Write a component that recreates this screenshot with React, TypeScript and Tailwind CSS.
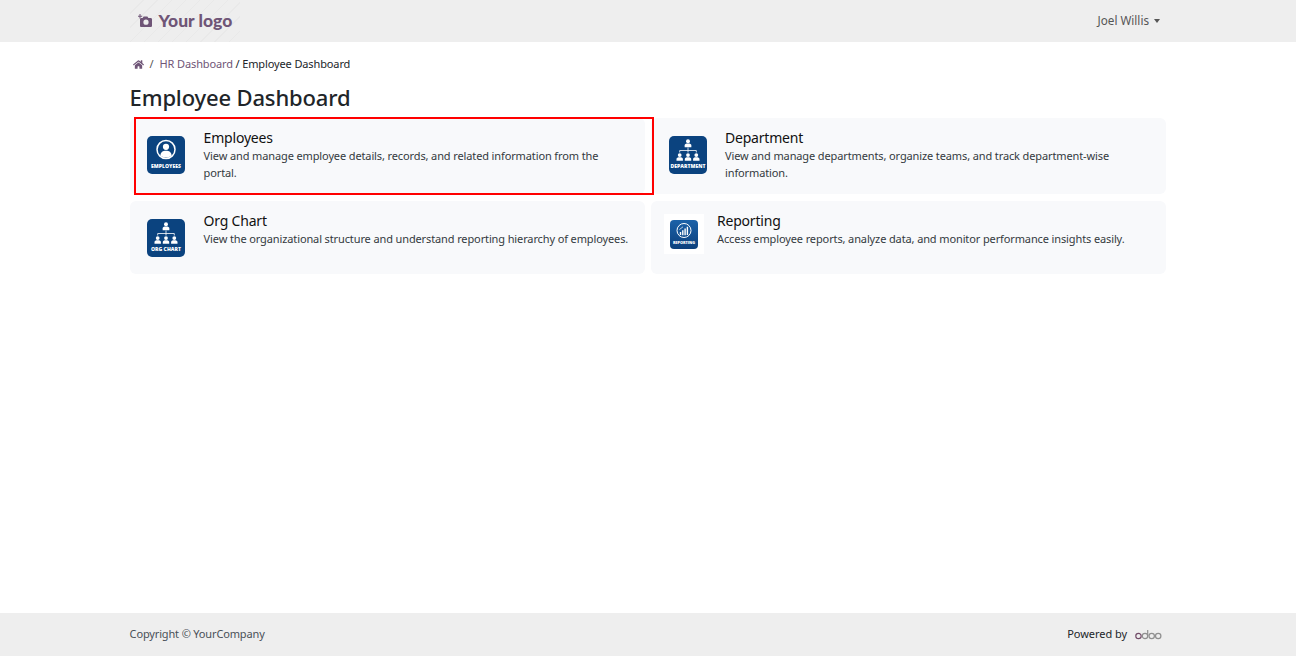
import React from 'react';
import { FaHome } from 'react-icons/fa';

const Person = ({ x, y, s = 1 }: { x: number; y: number; s?: number }) => (
  <g transform={`translate(${x} ${y}) scale(${s})`} fill="#fff">
    <circle cx="0" cy="-2.6" r="1.9" />
    <path d="M-3.2 3V1.4C-3.2 0 -2 -.5 0 -.5S3.2 0 3.2 1.4V3Z" />
  </g>
);

const IconBase = ({ label, children }: { label: string; children: React.ReactNode }) => (
  <svg width="38" height="38" viewBox="0 0 38 38">
    <rect width="38" height="38" rx="5" fill="#0b437f" />
    {children}
    <text x="19" y="31.500" textAnchor="middle" fill="#fff" fontSize="5.100" fontWeight="800" fontFamily="'Open Sans', sans-serif">
      {label}
    </text>
  </svg>
);

const EmployeesIcon = () => (
  <IconBase label="EMPLOYEES">
    <circle cx="19" cy="13.500" r="9" fill="none" stroke="#fff" strokeWidth="1.500" />
    <circle cx="19" cy="10.800" r="3.100" fill="#fff" />
    <path d="M13.400 19.400C13.600 16 16 14.800 19 14.800S24.400 16 24.600 19.400C23 20.900 21 21.500 19 21.500S15 20.900 13.400 19.400Z" fill="#fff" />
  </IconBase>
);

const TreeIcon = ({ label }: { label: string }) => (
  <IconBase label={label}>
    <Person x={19} y={8} s={1.05} />
    <path d="M19 11.500V14.500M10.700 16.500V14.500H27.300V16.500M19 14.500V16.500" fill="none" stroke="#fff" strokeWidth=".8" />
    <Person x={10.7} y={21.7} />
    <Person x={19} y={21.7} />
    <Person x={27.3} y={21.7} />
  </IconBase>
);

const ReportingIcon = () => (
  <svg width="28" height="29" viewBox="0 0 28 29">
    <defs>
      <linearGradient id="rep" x1="0" y1="0" x2="0" y2="1">
        <stop offset="0" stopColor="#1c62a8" />
        <stop offset="1" stopColor="#0b3f7c" />
      </linearGradient>
    </defs>
    <rect width="28" height="29" rx="4" fill="url(#rep)" />
    <circle cx="14" cy="10.500" r="7" fill="none" stroke="#fff" strokeWidth="1" />
    <path d="M9.800 12h1.400v3h-1.400zM12.100 10.300h1.400v5h-1.400zM14.400 8.500h1.400v6.800h-1.400zM16.700 6.800h1.400v8.200h-1.400z" fill="#fff" />
    <path d="M9.400 9.600 13 6.800" stroke="#fff" strokeWidth=".7" fill="none" />
    <text x="14" y="24" textAnchor="middle" fill="#fff" fontSize="3.800" fontWeight="800" fontFamily="'Open Sans', sans-serif">
      REPORTING
    </text>
  </svg>
);

const OdooLogo = () => (
  <svg width="27" height="11" viewBox="0 0 27 11" fill="none" strokeWidth="1.200">
    <circle cx="3.500" cy="7" r="2.700" stroke="#714b67" />
    <circle cx="10" cy="7" r="2.700" stroke="#8f8f8f" />
    <path d="M12.700 7V1" stroke="#8f8f8f" />
    <circle cx="16.700" cy="7" r="2.700" stroke="#8f8f8f" />
    <circle cx="23.200" cy="7" r="2.700" stroke="#8f8f8f" />
  </svg>
);

const DashboardCard = ({ title, text, icon, narrow }: { title: string; text: string; icon: React.ReactNode; narrow?: boolean }) => (
  <div className="flex items-start gap-[13px] rounded-md bg-[#f8f9fb] pl-[13px] pr-[7px]">
    <div className={narrow ? 'mt-[13px] flex h-10 w-10 shrink-0 items-center justify-center bg-white' : 'mt-[13px] flex h-12 w-12 shrink-0 items-center pl-[4.800px]'}>
      {icon}
    </div>
    <div className="min-w-0 flex-1 pt-[11px]">
      <div className="text-[14px] leading-[18px] tracking-[-0.2px] text-[#111]">{title}</div>
      <p className="max-w-[429px] text-[11px] leading-[17px] tracking-[-0.12px] text-[#343a40]">{text}</p>
    </div>
  </div>
);

export default function App() {
  return (
    <div className="flex h-screen flex-col bg-white font-['Noto_Sans','Open_Sans',sans-serif] text-[#212529]">
      <header className="h-[42px] shrink-0 bg-[#eeeeee]">
        <div className="ml-[129.600px] mr-[130px] flex h-full items-center justify-between pr-[6px]">
          <div className="flex h-full w-[110px] items-center gap-[6px] bg-[repeating-linear-gradient(135deg,transparent_0,transparent_9px,#e9e9e9_9px,#e9e9e9_10px)] pl-[8px]">
            <svg width="15" height="14" viewBox="0 0 15 14" fill="#6f5577">
              <path d="M2.500 0v1.700H4.200v1H2.500v1.700h-1V2.700H0v-1h1.500V0Z" />
              <path fillRule="evenodd" d="M5.600 2.600h3.800l1 1.500h2.300c.7 0 1.300.6 1.300 1.300v6.300c0 .7-.6 1.300-1.300 1.300H3.300c-.7 0-1.300-.6-1.300-1.300V5.400c0-.7.6-1.300 1.300-1.300h1.300ZM8 5.600a2.600 2.600 0 1 0 0 5.200 2.600 2.600 0 0 0 0-5.200Z" />
            </svg>
            <span className="font-['Lato',sans-serif] text-[17.500px] font-black leading-none text-[#6f5577]">Your logo</span>
          </div>
          <div className="flex items-center gap-[5px] text-[11.700px] text-[#555]">
            Joel Willis
            <span className="h-0 w-0 border-x-[3.500px] border-t-[4px] border-x-transparent border-t-[#555]" />
          </div>
        </div>
      </header>

      <main className="ml-[129.600px] min-h-0 flex-1">
        <nav className="flex h-[44px] items-center pl-[3px] text-[11px] tracking-[-0.12px]">
          <FaHome className="h-[11px] w-[11px] text-[#6f5577]" />
          <span className="ml-[6px] mr-[6px] text-[#555]">/</span>
          <span className="text-[#6f5577]">HR Dashboard</span>
          <span className="ml-[2.500px]">/ Employee Dashboard</span>
        </nav>
        <h1 className="h-[32px] text-[22px] font-medium leading-[23px] tracking-[-0.15px]">Employee Dashboard</h1>
        <div className="relative grid grid-cols-[515.400px_515px] grid-rows-[76px_73px] gap-x-[6px] gap-y-[7px]">
          <DashboardCard
            title="Employees"
            text="View and manage employee details, records, and related information from the portal."
            icon={<EmployeesIcon />}
          />
          <DashboardCard
            title="Department"
            text="View and manage departments, organize teams, and track department-wise information."
            icon={<TreeIcon label="DEPARTMENT" />}
          />
          <DashboardCard
            title="Org Chart"
            text="View the organizational structure and understand reporting hierarchy of employees."
            icon={<TreeIcon label="ORG CHART" />}
          />
          <DashboardCard
            title="Reporting"
            text="Access employee reports, analyze data, and monitor performance insights easily."
            icon={<ReportingIcon />}
            narrow
          />
          <div className="pointer-events-none absolute left-[4.400px] top-[-1px] h-[78px] w-[520px] border-2 border-[#ff0000]" />
        </div>
      </main>

      <footer className="h-[43px] shrink-0 bg-[#eeeeee]">
        <div className="ml-[129.600px] mr-[130px] flex h-full items-center justify-between pr-[4px] text-[11px]">
          <span className="tracking-[-0.15px] text-[#495057]">Copyright © YourCompany</span>
          <div className="flex items-center gap-[8px]">
            <span className="tracking-[-0.05px]">Powered by</span>
            <OdooLogo />
          </div>
        </div>
      </footer>
    </div>
  );
}
